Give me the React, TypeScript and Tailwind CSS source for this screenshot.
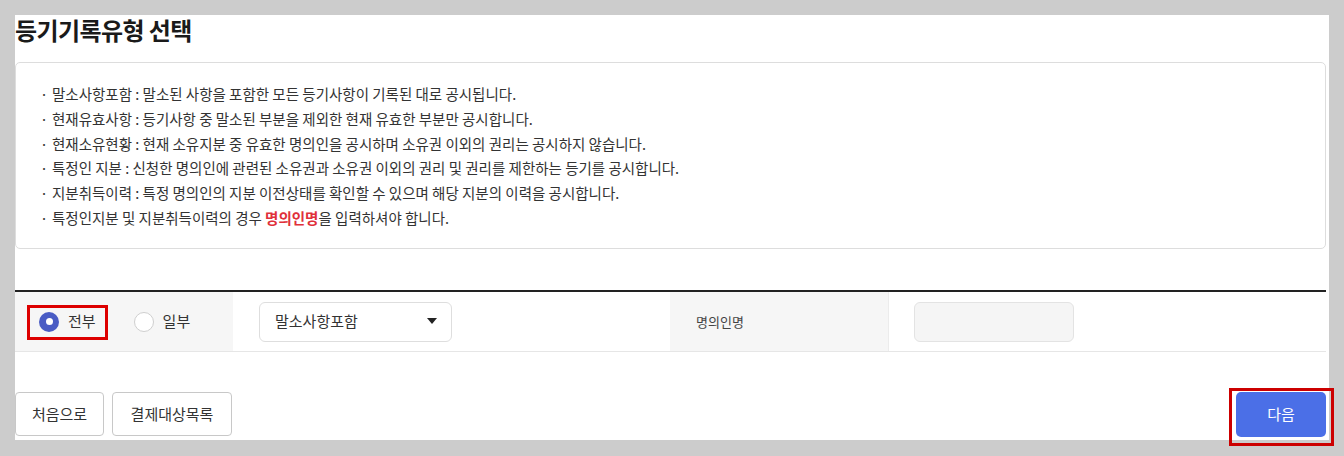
import React from "react";

const font = { fontFamily: '"Noto Sans CJK KR", "Noto Sans", sans-serif' };

const lines: React.ReactNode[] = [
  "말소사항포함 : 말소된 사항을 포함한 모든 등기사항이 기록된 대로 공시됩니다.",
  "현재유효사항 : 등기사항 중 말소된 부분을 제외한 현재 유효한 부분만 공시합니다.",
  "현재소유현황 : 현재 소유지분 중 유효한 명의인을 공시하며 소유권 이외의 권리는 공시하지 않습니다.",
  "특정인 지분 : 신청한 명의인에 관련된 소유권과 소유권 이외의 권리 및 권리를 제한하는 등기를 공시합니다.",
  "지분취득이력 : 특정 명의인의 지분 이전상태를 확인할 수 있으며 해당 지분의 이력을 공시합니다.",
  <>
    특정인지분 및 지분취득이력의 경우 <b className="font-bold text-[#e0303a]">명의인명</b>을 입력하셔야 합니다.
  </>,
];

export default function App() {
  return (
    <div className="w-[1344px] h-[456px] bg-[#cccccc] pt-[15px] pl-[15px] pr-[15px]" style={font}>
      <div className="relative bg-white h-[425px] pr-[3px]">
        <h2 className="text-[24px] font-bold leading-[30px] text-[#1a1a1a] tracking-[-0.6px]">등기기록유형 선택</h2>
        <div className="mt-[17px] h-[187px] border border-[#dddddd] rounded-[5px] pt-[19px] pl-[24px]">
          {lines.map((l, i) => (
            <div key={i} className="flex text-[14.5px] leading-[24.8px] text-[#333333]">
              <span className="w-[12px] shrink-0">·</span>
              <span>{l}</span>
            </div>
          ))}
        </div>
        <div className="mt-[41px] border-t-2 border-[#222222] flex h-[62px] border-b border-b-[#e6e6e6]">
          <div className="w-[218px] bg-[#f6f6f6] flex items-center pl-[24px] text-[15px] text-[#333333]">
            <label className="flex items-center gap-[9px]">
              <span className="w-[20px] h-[20px] rounded-full bg-[#4a5cc4] flex items-center justify-center">
                <span className="w-[7px] h-[7px] rounded-full bg-white" />
              </span>
              전부
            </label>
            <label className="flex items-center gap-[9px] ml-[38px]">
              <span className="w-[20px] h-[20px] rounded-full bg-white border border-[#cfcfcf]" />
              일부
            </label>
          </div>
          <div className="w-[437px] flex items-center pl-[26px]">
            <div className="w-[193px] h-[40px] border border-[#dedede] rounded-[6px] flex items-center justify-between pl-[15px] pr-[14px] text-[15px] text-[#333333]">
              <span>말소사항포함</span>
              <svg width="10" height="7" viewBox="0 0 10 7">
                <path d="M0 0 H10 L5 6 Z" fill="#222" />
              </svg>
            </div>
          </div>
          <div className="w-[219px] bg-[#f6f6f6] border-r border-[#ececec] flex items-center pl-[26px] text-[13px] text-[#444444]">
            명의인명
          </div>
          <div className="flex-1 flex items-center pl-[25px]">
            <div className="w-[160px] h-[40px] bg-[#f5f5f5] border border-[#e3e3e3] rounded-[6px]" />
          </div>
        </div>
        <div className="mt-[40px] flex justify-between items-start">
          <div className="flex gap-[8px]">
            <button className="w-[89px] h-[44px] border border-[#c8c8c8] rounded-[4px] bg-white text-[15px] text-[#333333]">처음으로</button>
            <button className="w-[120px] h-[44px] border border-[#c8c8c8] rounded-[4px] bg-white text-[15px] text-[#333333]">결제대상목록</button>
          </div>
          <button className="w-[90px] h-[45px] rounded-[5px] bg-[#4b6fe7] text-white text-[15px]">다음</button>
        </div>
        <div className="absolute left-[12px] top-[290px] w-[81px] h-[35px] border-[3px] border-[#dd0000]" />
        <div className="absolute left-[1214px] top-[373px] w-[105px] h-[58px] border-[3px] border-[#cc0000]" />
      </div>
    </div>
  );
}
